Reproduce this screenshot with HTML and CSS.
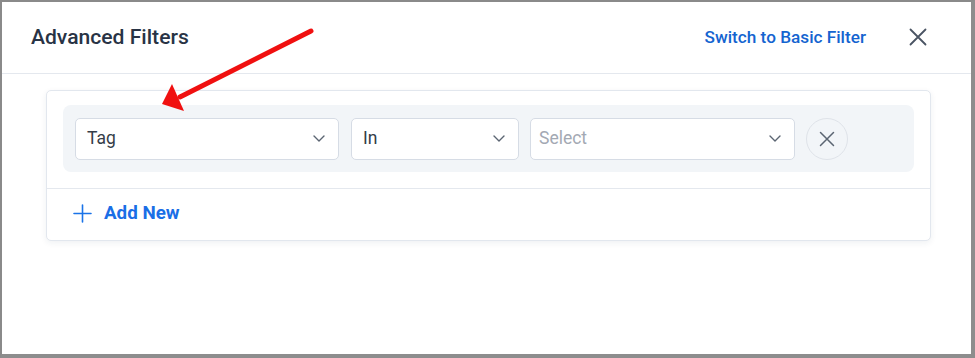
FILE: index.html
```html
<!DOCTYPE html>
<html>
<head>
<meta charset="utf-8">
<link rel="stylesheet" href="styles.css">
</head>
<body>
<div class="frame">
  <header class="header">
    <h1 class="title">Advanced Filters</h1>
    <div class="header-actions">
      <a class="switch-link">Switch to Basic Filter</a>
      <button class="close-btn" aria-label="Close">
        <svg width="18" height="18" viewBox="0 0 18 18"><path d="M1.5 1.5L16.5 16.5M16.5 1.5L1.5 16.5" stroke="#4a5463" stroke-width="1.8" stroke-linecap="round" fill="none"/></svg>
      </button>
    </div>
  </header>
  <main class="body">
    <section class="card">
      <div class="card-rows">
        <div class="filter-row">
          <div class="select select-field">
            <span class="value">Tag</span>
            <svg class="chev" width="12" height="7" viewBox="0 0 12 7"><path d="M1 1l5 5 5-5" stroke="#5b6572" stroke-width="1.4" fill="none" stroke-linecap="round" stroke-linejoin="round"/></svg>
          </div>
          <div class="select select-op">
            <span class="value">In</span>
            <svg class="chev" width="12" height="7" viewBox="0 0 12 7"><path d="M1 1l5 5 5-5" stroke="#5b6572" stroke-width="1.4" fill="none" stroke-linecap="round" stroke-linejoin="round"/></svg>
          </div>
          <div class="select select-val">
            <span class="placeholder">Select</span>
            <svg class="chev" width="12" height="7" viewBox="0 0 12 7"><path d="M1 1l5 5 5-5" stroke="#5b6572" stroke-width="1.4" fill="none" stroke-linecap="round" stroke-linejoin="round"/></svg>
          </div>
          <button class="remove-btn" aria-label="Remove">
            <svg width="16" height="16" viewBox="0 0 16 16"><path d="M1.5 1.5L14.5 14.5M14.5 1.5L1.5 14.5" stroke="#5b6572" stroke-width="1.5" stroke-linecap="round" fill="none"/></svg>
          </button>
        </div>
      </div>
      <div class="card-footer">
        <a class="add-new">
          <svg width="19" height="19" viewBox="0 0 19 19"><path d="M9.5 1v17M1 9.5h17" stroke="#1a73e8" stroke-width="1.6" stroke-linecap="round" fill="none"/></svg>
          <span>Add New</span>
        </a>
      </div>
    </section>
  </main>
  <svg class="pointer" width="975" height="358" viewBox="0 0 975 358">
    <path d="M311 31L180 97" stroke="#f01010" stroke-width="5" stroke-linecap="round" fill="none"/>
    <polygon points="162,104 172,84 184,111" fill="#f01010"/>
  </svg>
</div>
</body>
</html>
```

FILE: styles.css
```css
* { box-sizing: border-box; }
html, body { margin: 0; padding: 0; background: #ffffff; }
body { font-family: Roboto, "Noto Sans", "Liberation Sans", sans-serif; }

.frame {
  position: relative;
  width: 975px;
  height: 358px;
  border-top: 2px solid #8a8a8a;
  border-left: 2px solid #8a8a8a;
  border-right: 4px solid #8d8d8d;
  border-bottom: 4px solid #8d8d8d;
  background: #fff;
  overflow: hidden;
}

.header {
  height: 72px;
  display: flex;
  align-items: center;
  justify-content: space-between;
  padding: 0 44px 0 29px;
  border-bottom: 1px solid #e4e8ee;
}
.title {
  margin: 0;
  font-size: 21.1px;
  font-weight: 500;
  color: #283345;
  position: relative;
  top: -1px;
}
.header-actions {
  display: flex;
  align-items: center;
  gap: 43px;
}
.switch-link {
  color: #1464d0;
  font-size: 17.2px;
  font-weight: 500;
  position: relative;
  top: -1px;
}
.close-btn {
  border: 0;
  background: transparent;
  padding: 0;
  width: 18px;
  height: 18px;
  display: flex;
  position: relative;
  top: -1px;
}

.body {
  padding: 16px 0 0 44px;
}
.card {
  width: 885px;
  height: 151px;
  border: 1px solid #e2e7ee;
  border-radius: 5px;
  box-shadow: 0 2px 6px rgba(30, 50, 90, 0.07);
  background: #fff;
}
.card-rows {
  padding: 14px 16px 16px 16px;
  border-bottom: 1px solid #e4e8ee;
}
.filter-row {
  width: 851px;
  height: 67px;
  background: #f2f5f8;
  border-radius: 8px;
  display: flex;
  align-items: center;
  padding: 0 12px;
  gap: 11px;
}
.select {
  height: 42px;
  background: #fff;
  border: 1px solid #d6dce5;
  border-radius: 5px;
  display: flex;
  align-items: center;
  justify-content: space-between;
  padding: 0 13px 0 11px;
  font-size: 17.5px;
}
.select .value, .select .placeholder { position: relative; top: -1px; }
.select-field { width: 264px; margin-right: 1px; }
.select-op { width: 168px; }
.select-val { width: 265px; padding-left: 8px; }
.value { color: #353d48; }
.placeholder { color: #a3a9b3; }
.chev { display: block; }

.remove-btn {
  width: 42px;
  height: 42px;
  border-radius: 50%;
  border: 1px solid #dfe3e9;
  background: #f2f5f8;
  display: flex;
  align-items: center;
  justify-content: center;
  padding: 0;
}

.card-footer {
  height: 51px;
  display: flex;
  align-items: center;
  padding: 0 0 3px 26px;
}
.add-new {
  display: flex;
  align-items: center;
  gap: 12px;
  color: #1a6ee6;
  font-size: 18.8px;
  font-weight: 700;
}
.add-new svg { display: block; }

.pointer {
  position: absolute;
  left: -2px;
  top: -2px;
  pointer-events: none;
}
```
